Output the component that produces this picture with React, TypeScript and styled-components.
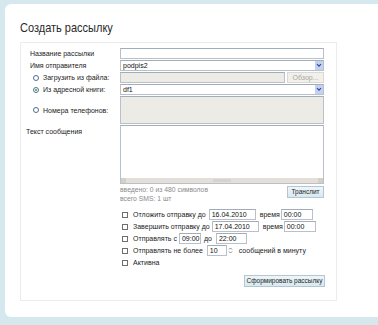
import React from "react";
import styled, { createGlobalStyle } from "styled-components";

const Global = createGlobalStyle`
  html, body { margin: 0; padding: 0; background: #d5e8ee; }
  body { font-family: "Liberation Sans", Arial, sans-serif; }
  * { box-sizing: border-box; }
`;

const Page = styled.div`
  width: 378px;
  height: 325px;
  padding: 4px 0 0 5px;
  background: #d5e8ee;
  overflow: hidden;
`;

const Panel = styled.div`
  background: #ffffff;
  height: 313px;
  border-radius: 6px 0 0 6px;
  padding: 16px 0 0 15px;
`;

const Title = styled.h1`
  margin: 0 0 6px;
  font-size: 11px;
  line-height: 16px;
  font-weight: normal;
  color: #2a2a2a;
  transform: scaleY(1.1);
  transform-origin: left center;
`;

const Box = styled.div`
  width: 317px;
  height: 259px;
  border: 1px solid #ececec;
  padding: 5px 12px 0 9px;
`;

const Grid = styled.div`
  display: grid;
  grid-template-columns: 90px 204px;
  row-gap: 1px;
  font-size: 7px;
  color: #222;
`;

const Label = styled.div<{ $top?: boolean; $shift?: number }>`
  display: flex;
  align-items: ${(p) => (p.$top ? "flex-start" : "center")};
  padding-top: ${(p) => (p.$top ? "3px" : "0")};
  margin-left: ${(p) => p.$shift ?? 0}px;
  white-space: nowrap;
`;

const Radio = styled.span<{ $on?: boolean }>`
  display: inline-block;
  width: 6px;
  height: 6px;
  border-radius: 50%;
  border: 1px solid #4f6f8f;
  background: #fff;
  margin: 0 4px 0 3px;
  position: relative;
  &::after {
    content: "";
    display: ${(p) => (p.$on ? "block" : "none")};
    position: absolute;
    left: 1px;
    top: 1px;
    width: 2px;
    height: 2px;
    border-radius: 50%;
    background: #3aa33a;
  }
`;

const Input = styled.div<{ $gray?: boolean; $w?: number; $h?: number }>`
  width: ${(p) => (p.$w ? `${p.$w}px` : "100%")};
  height: ${(p) => p.$h ?? 11}px;
  border: 1px solid #b7c0cb;
  border-top-color: #a3adb9;
  background: ${(p) => (p.$gray ? "#ecebe5" : "#fff")};
  font-size: 7px;
  line-height: 9px;
  padding: 0 2px;
  color: #111;
  white-space: nowrap;
  flex-shrink: 0;
`;

const SelectBox = styled.div`
  position: relative;
  height: 11px;
  border: 1px solid #b7c0cb;
  border-top-color: #a3adb9;
  background: #fff;
  font-size: 7px;
  line-height: 9px;
  padding: 0 2px;
  color: #111;
`;

const Arrow = styled.span`
  position: absolute;
  right: 0;
  top: 0;
  width: 8px;
  height: 9px;
  background: #c4d2f2;
  display: flex;
  align-items: center;
  justify-content: center;
`;

const FileRow = styled.div`
  display: flex;
  gap: 2px;
`;

const GrayButton = styled.div`
  width: 37px;
  height: 11px;
  border: 1px solid #d9d8d2;
  background: #f1f0eb;
  color: #a8a8a0;
  font-size: 7px;
  line-height: 9px;
  text-align: center;
`;

const Message = styled.div`
  height: 59px;
  border: 1px solid #b7c0cb;
  border-top-color: #a3adb9;
  background: #fff;
  display: flex;
  flex-direction: column;
  justify-content: flex-end;
`;

const HScroll = styled.div`
  height: 5px;
  background: #e4e0d9;
  display: flex;
  justify-content: space-between;
  align-items: stretch;
`;

const ScrollEnd = styled.span`
  width: 5px;
  background: #d5d0c7;
`;

const ScrollThumb = styled.span`
  width: 18px;
  margin: 1px 0;
  background: #d8d3ca;
`;

const HintRow = styled.div`
  display: flex;
  justify-content: space-between;
  align-items: flex-start;
`;

const Hints = styled.div`
  font-size: 6.8px;
  line-height: 9px;
  color: #8a8a8a;
  white-space: nowrap;
`;

const BlueButton = styled.div<{ $w: number }>`
  width: ${(p) => p.$w}px;
  height: 12px;
  border: 1px solid #b4c6d0;
  background: linear-gradient(#eef6fa, #d7e9f1);
  color: #222;
  font-size: 6.5px;
  line-height: 10px;
  text-align: center;
  white-space: nowrap;
  margin-top: 1px;
`;

const Options = styled.div`
  grid-column: 2;
  margin-top: 5px;
  display: flex;
  flex-direction: column;
  gap: 1px;
`;

const OptRow = styled.div`
  display: flex;
  align-items: center;
  height: 11px;
  white-space: nowrap;
`;

const Check = styled.span`
  width: 6px;
  height: 6px;
  border: 1px solid #6e6e6e;
  background: #fff;
  margin: 0 5px 0 2px;
  flex-shrink: 0;
`;

const Text = styled.span<{ $l?: number; $r?: number }>`
  margin-left: ${(p) => p.$l ?? 0}px;
  margin-right: ${(p) => p.$r ?? 3}px;
`;

const Spin = styled.span`
  width: 6px;
  height: 11px;
  margin: 0 5px 0 1px;
  display: flex;
  align-items: center;
  justify-content: center;
`;

const SubmitRow = styled.div`
  grid-column: 2;
  display: flex;
  justify-content: flex-end;
  margin-top: 5px;
  margin-right: -1px;
`;

const Chevron = () => (
  <svg width="6" height="5" viewBox="0 0 6 5">
    <path d="M1 1.2 L3 3.2 L5 1.2" stroke="#2c4a9a" strokeWidth="1.2" fill="none" />
  </svg>
);

const SpinIcon = () => (
  <svg width="5" height="9" viewBox="0 0 5 9">
    <path d="M1 3.5 L2.5 2 L4 3.5" stroke="#666" strokeWidth="0.8" fill="none" />
    <path d="M1 5.5 L2.5 7 L4 5.5" stroke="#666" strokeWidth="0.8" fill="none" />
  </svg>
);

export default function App() {
  return (
    <>
      <Global />
      <Page>
        <Panel>
          <Title>Создать рассылку</Title>
          <Box>
            <Grid>
              <Label>Название рассылки</Label>
              <Input />

              <Label>Имя отправителя</Label>
              <SelectBox>
                podpis2
                <Arrow>
                  <Chevron />
                </Arrow>
              </SelectBox>

              <Label>
                <Radio />
                Загрузить из файла:
              </Label>
              <FileRow>
                <Input $gray $w={165} />
                <GrayButton>Обзор...</GrayButton>
              </FileRow>

              <Label>
                <Radio $on />
                Из адресной книги:
              </Label>
              <SelectBox>
                df1
                <Arrow>
                  <Chevron />
                </Arrow>
              </SelectBox>

              <Label>
                <Radio />
                Номера телефонов:
              </Label>
              <Input $gray $h={28} />

              <Label $top $shift={-4}>
                Текст сообщения
              </Label>
              <Message>
                <HScroll>
                  <ScrollEnd />
                  <ScrollThumb />
                  <ScrollEnd />
                </HScroll>
              </Message>

              <div />
              <HintRow>
                <Hints>
                  введено: 0 из 480 символов
                  <br />
                  всего SMS: 1 шт
                </Hints>
                <BlueButton $w={37}>Транслит</BlueButton>
              </HintRow>

              <Options>
                <OptRow>
                  <Check />
                  <Text>Отложить отправку до</Text>
                  <Input $w={47}>16.04.2010</Input>
                  <Text $l={4} $r={1}>время</Text>
                  <Input $w={32}>00:00</Input>
                </OptRow>
                <OptRow>
                  <Check />
                  <Text $r={2}>Завершить отправку до</Text>
                  <Input $w={47}>17.04.2010</Input>
                  <Text $l={4} $r={1}>время</Text>
                  <Input $w={32}>00:00</Input>
                </OptRow>
                <OptRow>
                  <Check />
                  <Text $r={2}>Отправлять с</Text>
                  <Input $w={22}>09:00</Input>
                  <Text $l={3} $r={4}>до</Text>
                  <Input $w={31}>22:00</Input>
                </OptRow>
                <OptRow>
                  <Check />
                  <Text $r={4}>Отправлять не более</Text>
                  <Input $w={20}>10</Input>
                  <Spin>
                    <SpinIcon />
                  </Spin>
                  <span>сообщений в минуту</span>
                </OptRow>
                <OptRow>
                  <Check />
                  <span>Активна</span>
                </OptRow>
              </Options>

              <SubmitRow>
                <BlueButton $w={81}>Сформировать рассылку</BlueButton>
              </SubmitRow>
            </Grid>
          </Box>
        </Panel>
      </Page>
    </>
  );
}
